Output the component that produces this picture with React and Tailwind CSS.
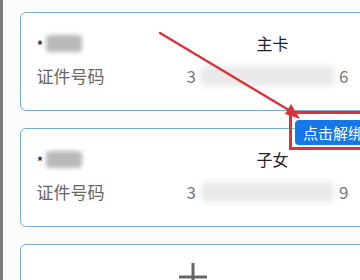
import React from "react"

const cards = [
  { tag: "主卡", last: "6" },
  { tag: "子女", last: "9" },
]

const font = { fontFamily: '"Noto Sans CJK SC", "Noto Sans", sans-serif' }

const MemberCard = ({ tag, last }) => (
  <div className="w-[360px] h-[99px] shrink-0 rounded-[6px] border-[1.5px] border-[#74acd2] bg-white pl-[15.5px] pt-[18px]">
    <div className="flex">
      {/* left column */}
      <div className="w-[150px] flex flex-col gap-[9px]">
        <div className="h-[24px] flex items-center">
          <span className="text-[15px] text-[#222] leading-none mt-[4px]">*</span>
          <span className="ml-[2px] w-[36px] h-[17px] bg-[#b9b9b9] blur-[2px] rounded-sm" />
        </div>
        <div className="h-[24px] flex items-center text-[17px] text-[#666]">证件号码</div>
      </div>
      {/* right column */}
      <div className="w-[162px] flex flex-col gap-[9px]">
        <div className="h-[24px] flex items-center justify-center pl-[10px] text-[16px] text-[#222]">
          {tag}
        </div>
        <div className="h-[24px] flex items-center text-[17px] text-[#777]">
          <span>3</span>
          <span className="flex-1 mx-[5px] h-[20px] bg-[#e9e9e9] blur-[3px] rounded" />
          <span>{last}</span>
        </div>
      </div>
    </div>
  </div>
)

const App = () => {
  return (
    <div className="relative w-[360px] h-[280px] overflow-hidden bg-[#fcfcfc] flex" style={font}>
      <div className="w-[3px] shrink-0 bg-[#7b7b7b]" />

      <div className="flex flex-col gap-[17px] pl-[17px] pt-[12px]">
        {cards.map(c => (
          <MemberCard key={c.tag} tag={c.tag} last={c.last} />
        ))}
        {/* add card */}
        <div className="w-[360px] h-[80px] shrink-0 rounded-[6px] border-[1.5px] border-[#74acd2] bg-white pl-[156px] pt-[16px]">
          <svg width="32" height="32" viewBox="0 0 32 32">
            <path d="M16 2 V30 M2 16 H30" stroke="#666" strokeWidth="3" />
          </svg>
        </div>
      </div>

      {/* annotation: red box + unbind button */}
      <div className="absolute left-[289px] top-[111px] w-[90px] h-[39px] border-[3px] border-[#d8343b]">
        <div className="ml-[3px] mt-[6px] h-[25px] w-[90px] rounded-[4px] bg-[#1677e8] text-white text-[15px] leading-[25px] pl-[8px] whitespace-nowrap">
          点击解绑
        </div>
      </div>

      {/* annotation: arrow */}
      <svg className="absolute left-0 top-0" width="360" height="280">
        <line x1="160" y1="33" x2="292" y2="112" stroke="#d8343b" strokeWidth="2.5" strokeLinecap="round" />
        <polygon points="300,119 285,114 291,104" fill="#d8343b" />
      </svg>
    </div>
  )
}

export default App
